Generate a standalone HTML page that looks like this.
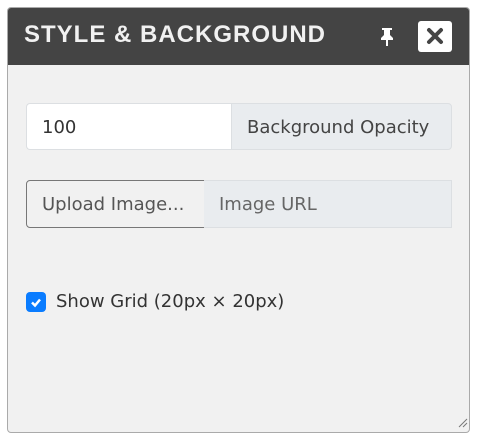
<!DOCTYPE html>
<html><head><style>
body{margin:0;width:479px;height:443px;background:#fff;font-family:"Liberation Sans",sans-serif;position:relative;overflow:hidden}
.panel{position:absolute;left:7px;top:7px;width:461px;height:424px;border:1px solid #aaa;border-radius:4px;background:#f1f1f1;overflow:hidden}
.hdr{position:absolute;left:0;top:0;width:100%;height:57px;background:#444}
.title{position:absolute;left:16px;top:13px;color:#f1f1f1;font-weight:bold;font-size:24px;letter-spacing:1px}
.close{position:absolute;left:410px;top:13px;width:34px;height:31px;background:#fff;border-radius:3px}
.box{position:absolute;font-family:"DejaVu Sans",sans-serif;font-size:18px;color:#444;box-sizing:border-box}
</style></head><body>
<div class="panel">
 <div class="hdr">
  <div class="title">STYLE &amp; BACKGROUND</div>
  <svg style="position:absolute;left:370px;top:19px" width="18" height="20" viewBox="0 0 18 20"><path d="M4 1h10v2h-2v5l3 3v2H10v6H8v-6H3v-2l3-3V3H4z" fill="#fff"/></svg>
  <div class="close"><svg width="34" height="31" viewBox="0 0 34 31"><path d="M11 9l12 12M23 9L11 21" stroke="#444" stroke-width="4" stroke-linecap="round"/></svg></div>
 </div>
</div>
<div class="box" style="left:26px;top:103px;width:206px;height:47px;background:#fff;border:1px solid #dcdfe2;border-right:none;border-radius:4px 0 0 4px;padding:13px 0 0 15px;color:#333">100</div>
<div class="box" style="left:231px;top:103px;width:221px;height:47px;background:#e9ecef;border:1px solid #dcdfe2;border-radius:0 4px 4px 0;padding:13px 0 0 15px">Background Opacity</div>
<div class="box" style="left:26px;top:180px;width:179px;height:48px;border:1px solid #777;border-radius:4px 0 0 4px;padding:13px 0 0 15px;color:#555">Upload Image...</div>
<div class="box" style="left:204px;top:180px;width:248px;height:48px;background:#e9ecef;border:1px solid #dcdfe2;border-left:none;padding:13px 0 0 15px;color:#666">Image URL</div>
<div style="position:absolute;left:26px;top:292px;width:20px;height:20px;background:#0a7cff;border-radius:4px"><svg width="20" height="20"><path d="M6 10.5l3 3 5-6" stroke="#fff" stroke-width="2.5" fill="none"/></svg></div>
<div class="box" style="left:56px;top:291px;color:#333">Show Grid (20px × 20px)</div>
<svg style="position:absolute;left:458px;top:418px" width="10" height="10"><path d="M1 9L9 1M5 9L9 5" stroke="#777" stroke-width="1"/></svg>
</body></html>
